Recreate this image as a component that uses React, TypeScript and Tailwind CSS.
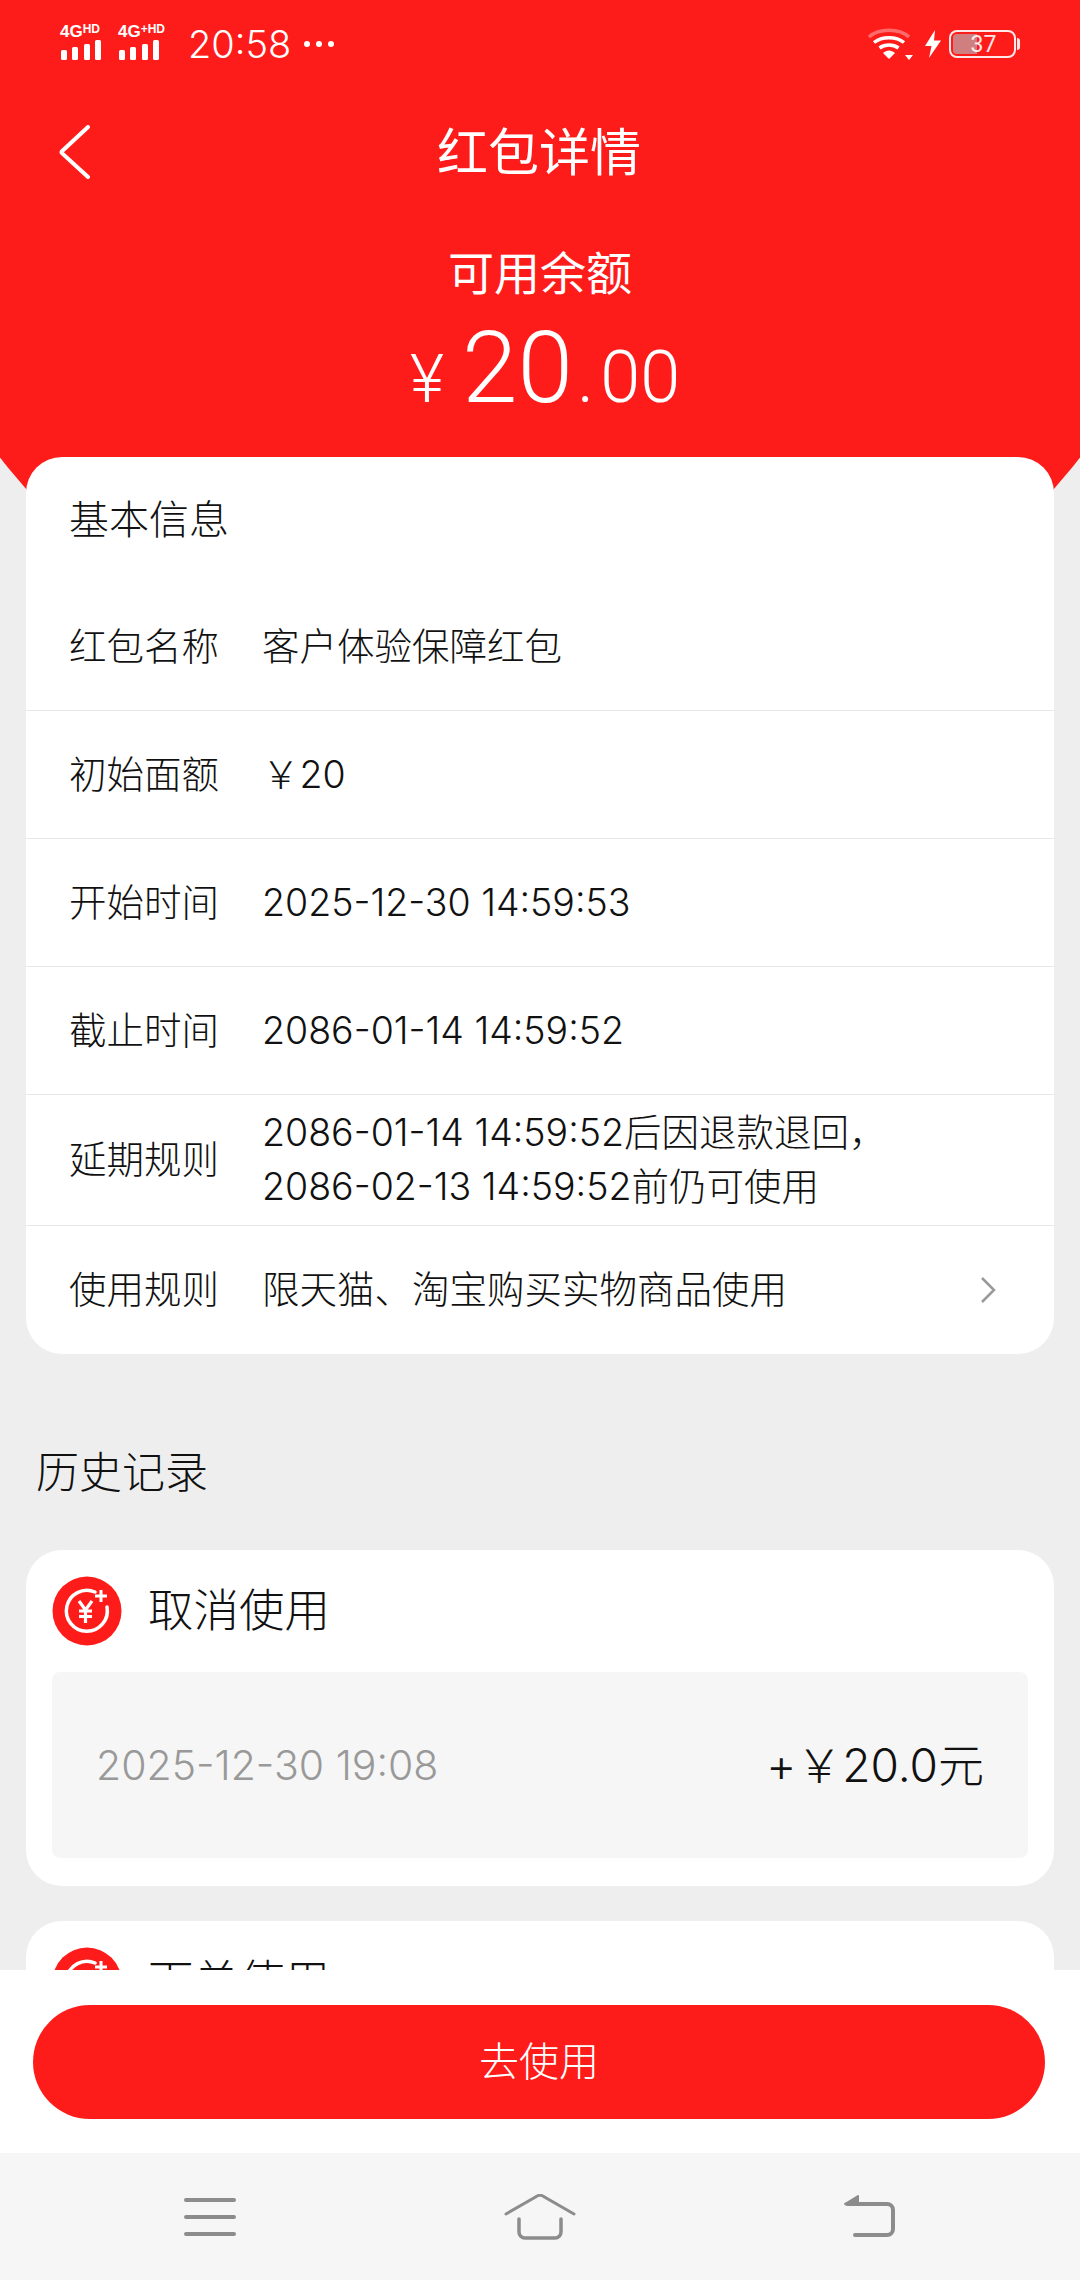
const font = "font-['Inter','Noto_Sans_CJK_SC',sans-serif]";

function Bars() {
  return (
    <svg width="42" height="20" viewBox="0 0 42 20" fill="white" aria-hidden="true">
      <rect x="1" y="10" width="6" height="10" rx="1.5" />
      <rect x="12" y="7" width="6" height="13" rx="1.5" />
      <rect x="24" y="4" width="6" height="16" rx="1.5" />
      <rect x="35" y="0" width="6" height="20" rx="1.5" />
    </svg>
  );
}

function Signal({ label, hd, w }: { label: string; hd: string; w: string }) {
  return (
    <div className={`flex flex-col items-start ${w}`}>
      <div className="flex h-[16px] items-start font-['Liberation_Sans',sans-serif] font-bold leading-none text-white">
        <span className="text-[17px] leading-[16px]">{label}</span>
        <span className="text-[12px] leading-[11px]">{hd}</span>
      </div>
      <Bars />
    </div>
  );
}

function Wifi() {
  return (
    <svg width="46" height="34" viewBox="0 0 46 34" fill="none" aria-hidden="true">
      <path d="M2 10C12 1 32 1 42 10" stroke="white" strokeOpacity="0.35" strokeWidth="3.5" />
      <path d="M7 15.5C15 9 29 9 37 15.5" stroke="white" strokeWidth="3.5" />
      <path d="M12.5 21C18 17 26 17 31.5 21" stroke="white" strokeWidth="3.5" />
      <path d="M16 26C19.5 22.5 24.5 22.5 28 26L22 32Z" fill="white" />
      <path d="M38 28H46L42 33Z" fill="white" />
    </svg>
  );
}

function Bolt() {
  return (
    <svg width="18" height="28" viewBox="0 0 18 28" fill="white" aria-hidden="true">
      <path d="M11 0 1 16H7.5L5 28 17 10.5H10Z" />
    </svg>
  );
}

function Battery() {
  return (
    <div className="flex items-center">
      <div className="relative flex h-[28px] w-[67px] items-center justify-center overflow-hidden rounded-[8px] border-2 border-white/90">
        <div className="absolute inset-y-[2px] left-[2px] w-[24px] rounded-l-[4px] bg-[#cf7f7f]" />
        <span className="relative pl-[2px] font-['Roboto',sans-serif] text-[23px] leading-none text-white/90">37</span>
      </div>
      <div className="ml-[1px] h-[12px] w-[3px] rounded-r-full bg-white/90" />
    </div>
  );
}

function StatusBar() {
  return (
    <div className="flex h-[84px] items-center pl-[60px] pr-[60px] pt-[4px]">
      <div className="-mt-[4px] flex items-center gap-[15px]">
        <Signal label="4G" hd="HD" w="w-[43px]" />
        <Signal label="4G" hd="+HD" w="w-[57px]" />
      </div>
      <span className="ml-[13px] text-[38px] font-light leading-none text-white">20:58</span>
      <div className="ml-[13px] flex gap-[6px]">
        <span className="h-[6px] w-[6px] rounded-full bg-white" />
        <span className="h-[6px] w-[6px] rounded-full bg-white" />
        <span className="h-[6px] w-[6px] rounded-full bg-white" />
      </div>
      <div className="ml-auto flex items-center gap-[11px]">
        <Wifi />
        <Bolt />
        <div className="-ml-[4px]">
          <Battery />
        </div>
      </div>
    </div>
  );
}

function NavBar() {
  return (
    <div className="grid h-[136px] grid-cols-[1fr_auto_1fr] items-center pl-[58px] pr-[60px]">
      <svg width="34" height="54" viewBox="0 0 34 54" fill="none" aria-hidden="true">
        <path d="M30 2 4 26.2a1.5 1.5 0 0 0 0 2L30 52" stroke="white" strokeWidth="4" strokeLinecap="round" />
      </svg>
      <h1 className="text-[51px] font-normal leading-none text-white">红包详情</h1>
      <div />
    </div>
  );
}

function Balance() {
  return (
    <div className="flex flex-col items-center text-white">
      <p className="mt-[30px] text-[46px] font-normal leading-[46px]">可用余额</p>
      <p className="mt-[22px] flex h-[100px] items-baseline pl-[10px] font-['Roboto',sans-serif] font-light leading-none">
        <span className="text-[66px]">¥</span>
        <span className="ml-[18px] text-[100px]">20</span>
        <span className="ml-[4px] text-[72px]">.</span>
        <span className="ml-[6px] text-[72px]">00</span>
      </p>
    </div>
  );
}

const rows = [
  { label: "红包名称", h: "h-[128px]", value: "客户体验保障红包" },
  { label: "初始面额", h: "h-[128px]", value: "￥20" },
  { label: "开始时间", h: "h-[128px]", value: "2025-12-30 14:59:53" },
  { label: "截止时间", h: "h-[128px]", value: "2086-01-14 14:59:52" },
  { label: "延期规则", h: "h-[131px]", value: "2086-01-14 14:59:52后因退款退回，\n2086-02-13 14:59:52前仍可使用" },
];

function InfoRow({ label, value, h }: { label: string; value: string; h: string }) {
  return (
    <div className={`flex shrink-0 items-center border-b border-[#e8e8e8] pl-[43px] ${h}`}>
      <span className="w-[193px] shrink-0 text-[37.500px] font-light leading-none text-[#111]">{label}</span>
      <span className="whitespace-pre-line text-[37.500px] font-light leading-[54px] text-[#111]">{value}</span>
    </div>
  );
}

function InfoCard() {
  return (
    <section className="relative mx-[26px] -mt-[246px] shrink-0 overflow-hidden rounded-[36px] bg-white">
      <h2 className="flex h-[126px] items-center pl-[43px] text-[40px] font-light leading-none text-[#111]">基本信息</h2>
      {rows.map((row) => (
        <InfoRow key={row.label} label={row.label} value={row.value} h={row.h} />
      ))}
      <div className="flex h-[128px] items-center pl-[43px] pr-[58px]">
        <span className="w-[193px] shrink-0 text-[37.500px] font-light leading-none text-[#111]">使用规则</span>
        <span className="flex-1 text-[37.500px] font-light leading-none text-[#111]">限天猫、淘宝购买实物商品使用</span>
        <svg width="16" height="28" viewBox="0 0 16 28" fill="none" aria-hidden="true">
          <path d="M2 2 14 14 2 26" stroke="#999" strokeWidth="2.5" />
        </svg>
      </div>
    </section>
  );
}

function YenIcon() {
  return (
    <svg width="70" height="70" viewBox="0 0 70 70" fill="none" className="shrink-0" aria-hidden="true">
      <circle cx="35" cy="35" r="34.5" fill="#fe1c1b" />
      <path d="M43 16A20.5 20.5 0 1 0 55 31" stroke="white" strokeWidth="3.5" strokeLinecap="round" />
      <path d="M49 14V26M43 20H55" stroke="white" strokeWidth="3" />
      <path d="M27 25 33.5 34 40 25M33.5 34V47M27 35H40M27 40.5H40" stroke="white" strokeWidth="3.2" />
    </svg>
  );
}

function HistoryCard({ title }: { title: string }) {
  return (
    <section className="mx-[26px] shrink-0 rounded-[36px] bg-white px-[26px] pb-[28px] pt-[27px]">
      <div className="flex h-[68px] items-center gap-[26px]">
        <YenIcon />
        <h3 className="text-[45.500px] font-light leading-none text-[#111]">{title}</h3>
      </div>
      <div className="mt-[27px] flex h-[186px] items-center justify-between rounded-[8px] bg-[#f6f6f6] px-[44px]">
        <span className="text-[41px] font-light leading-none text-[#999]">2025-12-30 19:08</span>
        <span className="text-[46px] font-light leading-none text-[#111]">+￥20.0元</span>
      </div>
    </section>
  );
}

function SystemNav() {
  return (
    <nav className="grid h-[127px] shrink-0 grid-cols-[330px_330px_330px] items-center justify-center bg-[#f6f6f6]">
      <svg width="52" height="40" viewBox="0 0 52 40" fill="none" className="justify-self-center" aria-hidden="true">
        <path d="M2 3H50M2 20H50M2 37H50" stroke="#8c8c8c" strokeWidth="4" strokeLinecap="round" />
      </svg>
      <svg width="72" height="46" viewBox="0 0 72 46" fill="none" className="justify-self-center" aria-hidden="true">
        <path d="M2 20 31.500 3a7 7 0 0 1 9 0L70 20" stroke="#8c8c8c" strokeWidth="3" strokeLinecap="round" />
        <path d="M15 25V38a6 6 0 0 0 6 6H51a6 6 0 0 0 6-6V25" stroke="#8c8c8c" strokeWidth="3.500" strokeLinecap="round" />
      </svg>
      <svg width="52" height="44" viewBox="0 0 52 44" fill="none" className="-ml-[2px] justify-self-center" aria-hidden="true">
        <path d="M2 9 15 1V9Z" fill="#8c8c8c" stroke="#8c8c8c" strokeWidth="2" strokeLinejoin="round" />
        <path d="M4 9H44a6 6 0 0 1 6 6V34a6 6 0 0 1-6 6H12" stroke="#8c8c8c" strokeWidth="4" strokeLinecap="round" />
      </svg>
    </nav>
  );
}

export default function App() {
  return (
    <div className={`flex h-[2280px] w-[1080px] flex-col overflow-hidden bg-[#eeeeee] ${font}`}>
      <main className="flex min-h-0 flex-1 flex-col overflow-hidden">
        <header className="-mx-[100px] h-[703px] w-[1280px] shrink-0 rounded-b-[640px_530px] bg-[#fe1c1b] px-[100px]">
          <StatusBar />
          <NavBar />
          <Balance />
        </header>
        <InfoCard />
        <h2 className="flex h-[196px] shrink-0 items-center pl-[36px] pt-[40px] text-[43px] font-light leading-none text-[#111]">历史记录</h2>
        <div className="flex shrink-0 flex-col gap-[35px]">
          <HistoryCard title="取消使用" />
          <HistoryCard title="下单使用" />
        </div>
      </main>
      <div className="flex h-[183px] shrink-0 items-center bg-white pl-[33px] pr-[35px]">
        <button className="h-[114px] w-full rounded-full bg-[#fe1c1b] text-[40px] font-light text-white">去使用</button>
      </div>
      <SystemNav />
    </div>
  );
}
